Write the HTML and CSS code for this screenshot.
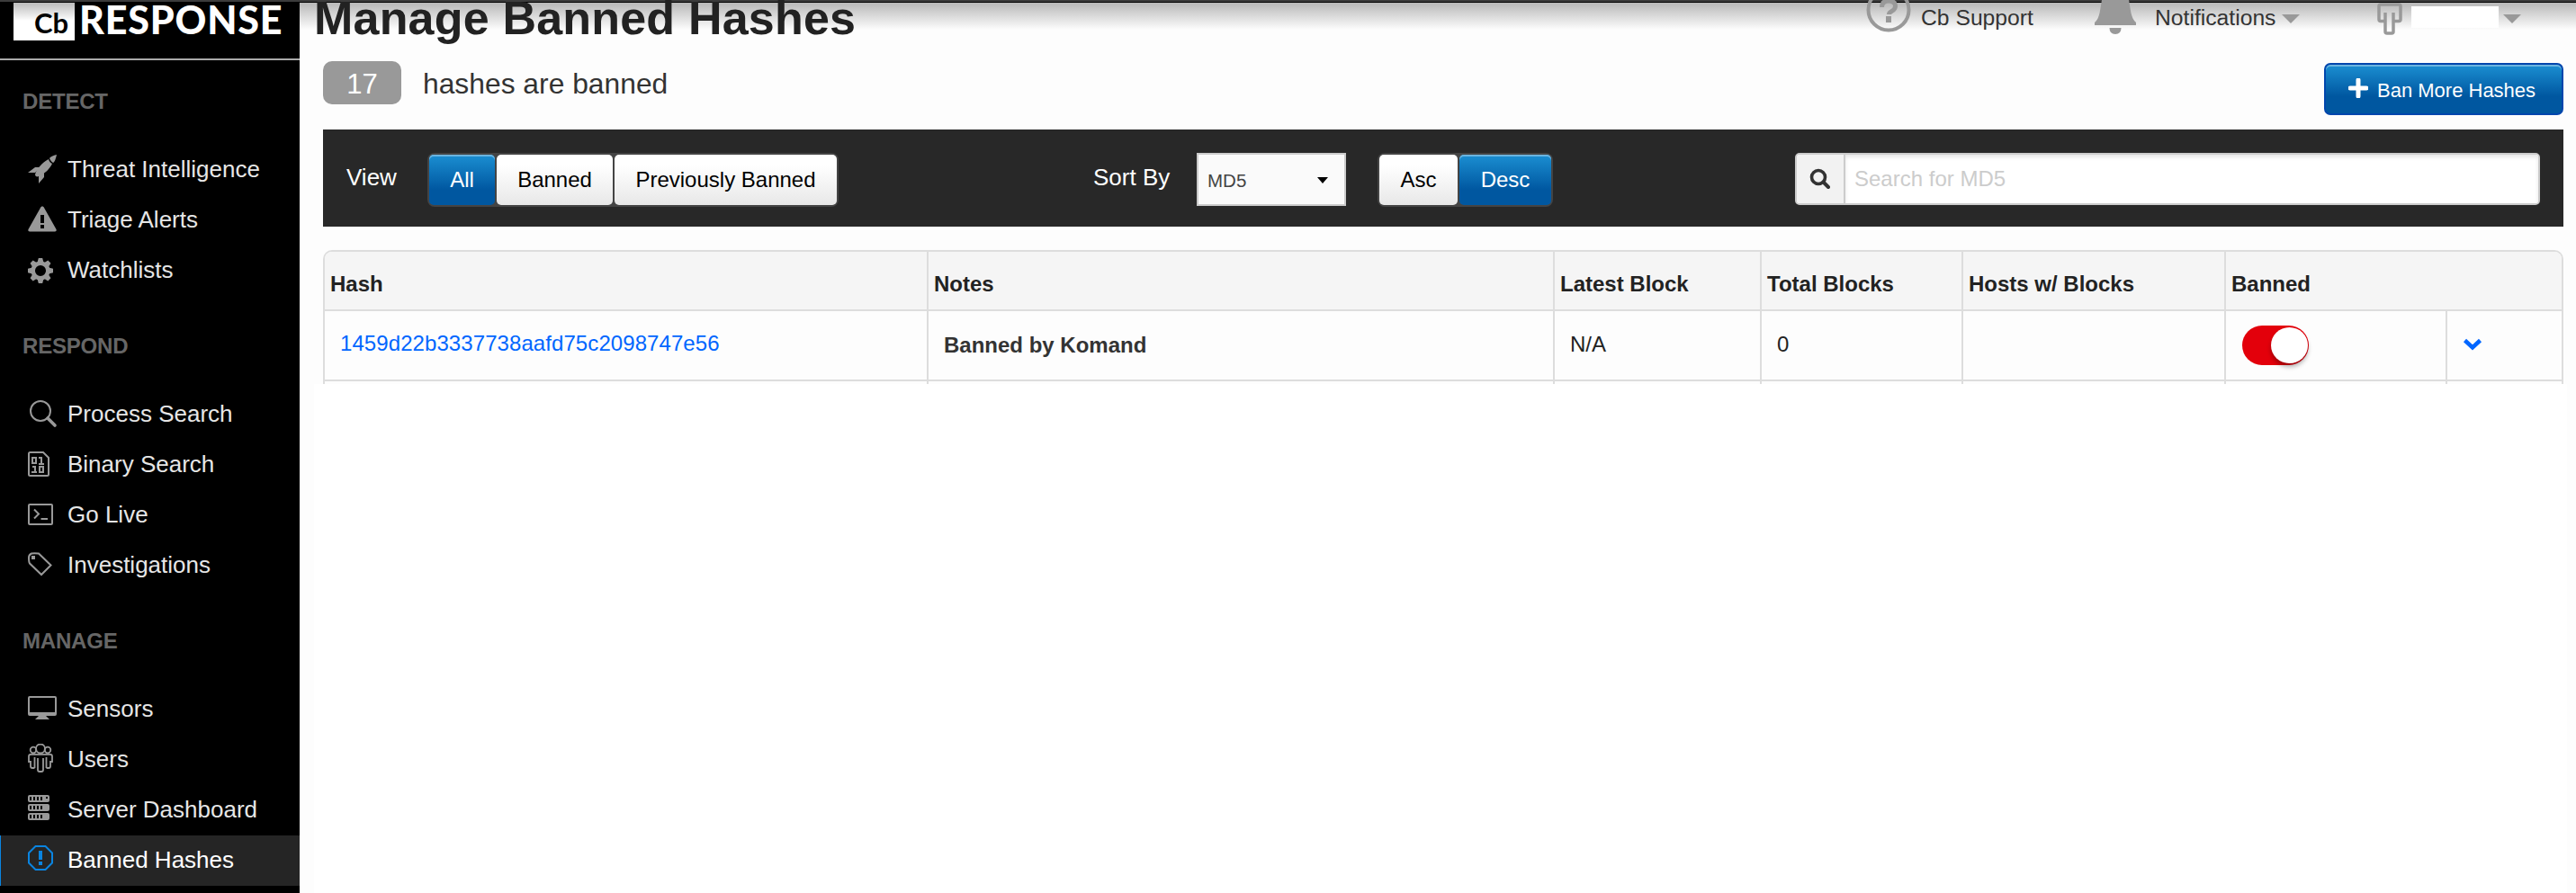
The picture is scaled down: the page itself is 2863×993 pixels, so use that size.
FILE: index.html
```html
<!DOCTYPE html>
<html lang="en">
<head>
<meta charset="utf-8">
<title>Manage Banned Hashes</title>
<link rel="stylesheet" href="styles.css">
</head>
<body>
<div class="topstrip"></div>
<div class="app">
  <aside class="sidebar">
    <div class="brand">
      <span class="brand-box">Cb</span>
      <span class="brand-name">RESPONSE</span>
    </div>
    <nav>
      <h2 class="group first">DETECT</h2>
      <a class="item"><svg class="ico" width="34" height="34" viewBox="0 0 34 34"><g fill="#999"><path d="M33 1c-4 1-7 2-8 4 1 2 2 4 4 5 2-1 3-5 4-9z"/><path d="M24 6C17 10 11 16 9 23c0 2 2 3 4 2 7-3 12-8 15-14-2-1-3-2-4-5z"/><path d="M15 15H9L1 21h8zM19 21v5l-6 7v-9z"/></g></svg>Threat Intelligence</a>
      <a class="item"><svg class="ico" width="34" height="34" viewBox="0 0 34 34"><path fill="#999" fill-rule="evenodd" d="M17 2.500c1 0 1.500.500 2 1.500L32.500 28c.500 1.500 0 2.500-1.500 2.500H3c-1.500 0-2-1-1.500-2.500L15 4c.500-1 1-1.500 2-1.500zM15 12v9h4v-9zM15 23v4h4v-4z"/></svg>Triage Alerts</a>
      <a class="item"><svg class="ico" width="34" height="34" viewBox="0 0 34 34"><g transform="translate(15 18)" fill="#999"><path id="tooth" d="M-2.200-14h4.400l1.300 5h-7z"/><use href="#tooth" transform="rotate(45)"/><use href="#tooth" transform="rotate(90)"/><use href="#tooth" transform="rotate(135)"/><use href="#tooth" transform="rotate(180)"/><use href="#tooth" transform="rotate(225)"/><use href="#tooth" transform="rotate(270)"/><use href="#tooth" transform="rotate(315)"/><circle r="8.300" fill="none" stroke="#999" stroke-width="4.500"/></g></svg>Watchlists</a>

      <h2 class="group">RESPOND</h2>
      <a class="item"><svg class="ico" width="34" height="34" viewBox="0 0 34 34"><g fill="none" stroke="#999"><circle cx="15" cy="14" r="11" stroke-width="2"/><path d="M23 22l8 8" stroke-width="3.600" stroke-linecap="round"/></g></svg>Process Search</a>
      <a class="item"><svg class="ico" width="34" height="34" viewBox="0 0 34 34"><g fill="none" stroke="#999" stroke-width="2"><path d="M2 5.500q0-1.500 1.500-1.500H18l6 6v18.500q0 1.500-1.500 1.500h-19Q2 30 2 28.500z"/><path d="M6 10h4v6H6zM13 10h3v7M13 17h6M6 20h3v6M5 26h6M14 20h4v6h-4z"/></g></svg>Binary Search</a>
      <a class="item"><svg class="ico" width="34" height="34" viewBox="0 0 34 34"><g fill="none" stroke="#999" stroke-width="2"><rect x="2" y="6" width="26" height="22" rx="1"/><path d="M8 11.500l5 5-5 5M15.500 22H23"/></g></svg>Go Live</a>
      <a class="item"><svg class="ico" width="34" height="34" viewBox="0 0 34 34"><path fill="none" stroke="#999" stroke-width="2" d="M2 9q0-3 3-4.500Q8 4 13 4.500L26.500 17.500 16 28 3 15.500Q2 14 2 9z"/><path fill="#999" d="M5 7h4v4H5z"/></svg>Investigations</a>

      <h2 class="group">MANAGE</h2>
      <a class="item"><svg class="ico" width="34" height="34" viewBox="0 0 34 34"><path fill="#999" fill-rule="evenodd" d="M3 3h28q2 0 2 2v18q0 2-2 2H3q-2 0-2-2V5q0-2 2-2zM3 5v16h28V5z"/><path fill="#999" d="M13 25h8l4 4H9z"/></svg>Sensors</a>
      <a class="item"><svg class="ico" width="34" height="34" viewBox="0 0 34 34"><g fill="none" stroke="#999" stroke-width="1.800"><circle cx="15" cy="5.500" r="5"/><circle cx="7" cy="7" r="3.300"/><circle cx="23" cy="7" r="3.300"/><path d="M4 12h22"/><path d="M12 16v13q0 2 2 2h2q2 0 2-2V16"/><path d="M8.500 15v12M21.500 15v12"/><path d="M4 12Q2 12 2 14v6h2v5q0 2 2 2h2.500M26 12q2 0 2 2v6h-2v5q0 2-2 2h-2.500"/></g></svg>Users</a>
      <a class="item"><svg class="ico" width="34" height="34" viewBox="0 0 34 34"><g fill="#999"><rect x="1" y="1" width="24" height="8" rx="2"/><rect x="1" y="11" width="24" height="8" rx="2"/><rect x="1" y="21" width="24" height="8" rx="2"/></g><path d="M4 3v4M8 3v4M12 3v4M16 3v4M4 13v4M8 13v4M12 13v4M16 13v4M4 23v4M8 23v4M12 23v4M16 23v4" stroke="#000" stroke-width="2"/><path d="M21 3h2v2h-2z" fill="#000"/></svg>Server Dashboard</a>
      <a class="item active"><svg class="ico" width="34" height="34" viewBox="0 0 34 34"><path fill="none" stroke="#0a84e0" stroke-width="2" d="M9.500 2h11L28 9.500v11L20.500 28h-11L2 20.500v-11z"/><path fill="#0a84e0" d="M13 7h4v10h-4zM13 19h4v4h-4z"/></svg>Banned Hashes</a>
    </nav>
  </aside>

  <main class="main">
    <header class="header">
      <h1 class="title">Manage Banned Hashes</h1>
      <div class="links">
        <span class="link support"><svg width="50" height="40" viewBox="0 0 50 40"><circle cx="25" cy="11" r="22.500" fill="none" stroke="#999" stroke-width="4"/><path d="M17.500 8q0-7 7.500-7t7.500 6q0 3-4 5.500-3 1.500-3 3.500" fill="none" stroke="#999" stroke-width="5"/><path d="M22 18h6v7h-6z" fill="#999"/></svg>Cb Support</span>
        <span class="link notif"><svg width="46" height="40" viewBox="0 0 46 40"><path fill="#999" d="M8 0h30c2 10 2 20 8 25v3H0v-3C6 20 6 10 8 0zM16.500 31h13q0 7-6.500 7t-6.500-7z"/></svg>Notifications<i class="caret"></i></span>
        <span class="link account"><svg width="30" height="40" viewBox="0 0 30 40"><path fill="none" stroke="#999" stroke-width="3.500" d="M10 14v21q0 2 2 2h5q2 0 2-2V14M9 23.500H5q-2 0-2-2V7q0-2 2-2h20q2 0 2 2v14.500q0 2-2 2h-5"/></svg><span class="mask"></span><i class="caret"></i></span>
      </div>
    </header>

    <section class="summary">
      <span class="count">17</span>
      <span class="count-label">hashes are banned</span>
      <button class="ban"><svg width="22" height="22" viewBox="0 0 22 22"><path d="M11 2v18M2 11h18" stroke="#fff" stroke-width="5" stroke-linecap="round"/></svg>Ban More Hashes</button>
    </section>

    <section class="toolbar">
      <span class="label view">View</span>
      <div class="group-btn views"><button class="btn on">All</button><button class="btn">Banned</button><button class="btn">Previously Banned</button></div>
      <span class="label sort">Sort By</span>
      <div class="select">MD5<i class="arrow"></i></div>
      <div class="group-btn order"><button class="btn">Asc</button><button class="btn on">Desc</button></div>
      <div class="search"><span class="addon"><svg width="24" height="24" viewBox="0 0 24 24"><g fill="none" stroke="#333"><circle cx="10" cy="10" r="7.500" stroke-width="3.600"/><path d="M15.500 15.500l5.500 5.500" stroke-width="4" stroke-linecap="round"/></g></svg></span><input class="field" type="text" placeholder="Search for MD5"></div>
    </section>

    <section class="table">
      <div class="row head"><div class="cell">Hash</div><div class="cell">Notes</div><div class="cell">Latest Block</div><div class="cell">Total Blocks</div><div class="cell">Hosts w/ Blocks</div><div class="cell wide">Banned</div></div>
      <div class="row data"><div class="cell hash">1459d22b3337738aafd75c2098747e56</div><div class="cell note">Banned by Komand</div><div class="cell">N/A</div><div class="cell">0</div><div class="cell"></div><div class="cell"><span class="toggle"><span class="knob"></span></span></div><div class="cell"><svg width="24" height="16" viewBox="0 0 24 16"><path d="M3.500 3.500l8.500 8 8.500-8" fill="none" stroke="#06f" stroke-width="4.500"/></svg></div></div>
      <div class="row stub"><div class="cell"></div><div class="cell"></div><div class="cell"></div><div class="cell"></div><div class="cell"></div><div class="cell"></div><div class="cell"></div></div>
    </section>
    <div class="blank"></div>
  </main>
</div>
</body>
</html>
```
FILE: styles.css
```css
* { box-sizing: border-box; }
html, body { height: 100%; margin: 0; overflow: hidden; }
body { display: flex; flex-direction: column; background: #fdfdfd; font-family: "Liberation Sans", Arial, sans-serif; font-size: 24px; color: #222; }
h1, h2 { margin: 0; }
button { font-family: inherit; padding: 0; }

.topstrip { height: 3px; flex: none; background: linear-gradient(#3c3c3c 0 2px, #000 2px 3px); }
.app { flex: 1; display: flex; min-height: 0; }

.sidebar { width: 333px; flex: none; background: #000; color: #e6e6e6; }
.brand { height: 64px; border-bottom: 2px solid #aaa; display: flex; align-items: flex-start; gap: 5px; padding-left: 15px; }
.brand-box { width: 68px; height: 42px; padding-right: 7px; background: linear-gradient(#bbb, #fff 20px); color: #000; font: bold 31px/45px Lato, sans-serif; text-align: right; }
.brand-name { color: #fff; font: 900 43px/38px Lato, sans-serif; letter-spacing: 0.8px; white-space: nowrap; }

.group { height: 104px; padding: 32px 0 0 25px; font-size: 24px; line-height: 48px; letter-spacing: -0.2px; color: #666; }
.group.first { height: 94px; padding-top: 22px; }
.item { display: flex; align-items: center; height: 56px; padding: 0 0 2px 30px; font-size: 26px; line-height: 54px; white-space: nowrap; }
.ico { flex: none; margin-right: 11px; }
.item.active { background: #252525; color: #fff; border-left: 1px solid #0a84e0; padding-left: 29px; }

.main { flex: 1; min-width: 0; display: flex; flex-direction: column; }
.header { height: 65px; flex: none; display: flex; justify-content: space-between; background: linear-gradient(#b8b8b8, #fdfdfd 30px); }
.title { padding-left: 16px; font-size: 52px; line-height: 35px; letter-spacing: 0.2px; white-space: nowrap; }
.links { display: flex; }
.link { display: flex; align-items: flex-start; height: 37px; font-size: 24.700px; line-height: 33px; white-space: nowrap; color: #333; }
.link svg { margin-top: -3px; flex: none; }
.support { width: 254px; gap: 11px; }
.notif { width: 313px; gap: 21px; }
.account { width: 222px; gap: 9px; }
.caret { width: 0; height: 0; margin-top: 13px; border: 10px solid transparent; border-top-color: #999; border-bottom: 0; }
.notif .caret { margin-left: -14px; }
.mask { width: 97px; height: 24px; margin-top: 4px; background: #fff; }
.account .caret { margin-left: -4px; }

.summary { height: 76px; flex: none; display: flex; align-items: flex-start; padding: 0 14px 0 26px; }
.count { width: 87px; height: 48px; border-radius: 10px; background: #999; color: #fff; font-size: 31px; line-height: 51px; text-align: center; }
.count-label { margin-left: 24px; font-size: 31.800px; line-height: 50px; color: #333; }
.ban { margin: 2px 0 0 auto; width: 266px; height: 58px; display: flex; align-items: center; gap: 10px; padding: 3px 0 0 25px; border: 2px solid #0046ad; border-radius: 7px; color: #fff; font-size: 22px; white-space: nowrap; background: linear-gradient(#1b8fd2, #0057a0 65%); box-shadow: inset 0 2px 0 #6bb4e0; }
.ban svg { margin-top: -5px; }

.toolbar { margin: 0 14px 0 26px; height: 108px; flex: none; display: flex; align-items: flex-start; padding-top: 26px; background: #282828; }
.label { color: #fff; font-size: 26px; line-height: 54px; white-space: nowrap; }
.view { width: 116px; padding-left: 26px; }
.group-btn { display: flex; gap: 2px; padding: 2px; height: 60px; border-radius: 8px; background: #444; }
.btn { border: 0; border-radius: 5px; background: linear-gradient(#fff, #fff 20%, #e8e8e8); color: #000; font-size: 24px; line-height: 56px; white-space: nowrap; flex: 1 1 auto; }
.btn.on { color: #fff; background: linear-gradient(#1b8fd2, #0057a0 70%); box-shadow: inset 0 2px 0 #6bb4e0; }
.views { width: 457px; }
.views .btn:nth-child(1) { flex: 0 0 73px; }
.views .btn:nth-child(2) { flex: 0 0 129px; }
.sort { margin-left: 283px; width: 115px; }
.select { width: 166px; height: 59px; border: 2px solid #ccc; background: #fafafa; color: #444; font-size: 20.500px; line-height: 59px; padding: 2px 18px 0 10px; display: flex; justify-content: space-between; align-items: center; }
.arrow { border: 6px solid transparent; border-top: 7px solid #000; border-bottom: 0; margin-top: 0; }
.order { margin-left: 35px; width: 195px; }
.order .btn:nth-child(1) { flex: 0 0 87px; }
.search { margin-left: 269px; width: 828px; height: 58px; display: flex; border: 2px solid #ccc; border-radius: 5px; overflow: hidden; background: #fff; }
.addon { width: 54px; flex: none; border-right: 2px solid #ccc; background: #f2f2f2; display: flex; align-items: center; justify-content: center; }
.field { flex: 1; border: 0; outline: 0; padding: 0 10px; font: inherit; background: #fff; box-shadow: inset 0 3px 4px #e6e6e6; }
.field::placeholder { color: #ccc; opacity: 1; }

.table { margin: 26px 14px 0 26px; flex: none; border: 2px solid #ddd; border-bottom: 0; border-radius: 10px 10px 0 0; overflow: hidden; }
.row { display: grid; grid-template-columns: 671px 696px 230px 224px 292px 246px 1fr; }
.cell { border-right: 2px solid #ddd; white-space: nowrap; }
.row .cell:last-child { border-right: 0; }
.head { height: 66px; background: #f5f5f5; border-bottom: 2px solid #ddd; font-weight: bold; line-height: 72px; }
.head .cell { padding-left: 6px; }
.wide { grid-column: span 2; }
.data { height: 78px; border-bottom: 2px solid #ddd; line-height: 74px; }
.data .cell { padding-left: 17px; }
.data .hash { color: #06f; line-height: 72px; letter-spacing: 0.08px; }
.data .note { font-weight: bold; line-height: 75px; color: #333; }
.data .cell svg { vertical-align: middle; margin-top: -3px; margin-left: -1px; }
.stub { height: 3px; }
.toggle { display: block; width: 74px; height: 44px; margin: 16px 0 0 1px; padding: 2px 1px; border-radius: 22px; background: #e3000b; }
.knob { display: block; width: 41px; height: 40px; margin-left: auto; border-radius: 50%; background: #fff; box-shadow: 0 4px 5px rgba(0,0,0,.3); }
.blank { flex: 1; margin: 0 10px 0 16px; background: #fff; }
```
